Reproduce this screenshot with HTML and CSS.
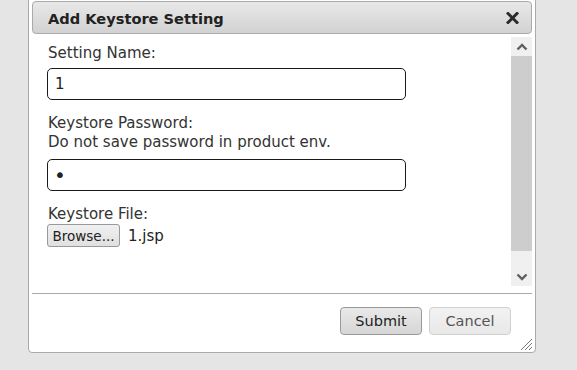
FILE: index.html
```html
<!DOCTYPE html>
<html lang="en">
<head>
    <meta charset="UTF-8">
    <title>Add Keystore Setting</title>
    <link rel="stylesheet" href="styles.css">
</head>
<body>

    <!-- Dialog -->
    <div class="dialog">
        <div class="dialog-title">
            <span class="title-text">Add Keystore Setting</span>
            <button class="close-btn" title="Close">
                <svg width="13" height="12" viewBox="0 0 13 12">
                    <path d="M2 1.5 L11 10.5 M11 1.5 L2 10.5" stroke="#2b2b2b" stroke-width="3" stroke-linecap="square"/>
                </svg>
            </button>
        </div>

        <!-- Scrollable body -->
        <div class="dialog-body">
            <form class="form-area">
                <div class="field">
                    <div class="field-label">Setting Name:</div>
                    <input class="text-input" type="text" value="1">
                </div>
                <div class="field">
                    <div class="field-label">Keystore Password:<br>Do not save password in product env.</div>
                    <input class="text-input pass" type="password" value="x">
                </div>
                <div class="field">
                    <div class="field-label">Keystore File:</div>
                    <div class="file-row">
                        <button type="button" class="browse-btn">Browse...</button>
                        <span class="file-name">1.jsp</span>
                    </div>
                </div>
            </form>

            <div class="scrollbar">
                <div class="scroll-arrow">
                    <svg width="12" height="8" viewBox="0 0 12 8"><path d="M1.5 6.5 L6 2 L10.5 6.5" fill="none" stroke="#606060" stroke-width="2.4"/></svg>
                </div>
                <div class="scroll-thumb"></div>
                <div class="scroll-track"></div>
                <div class="scroll-arrow">
                    <svg width="12" height="8" viewBox="0 0 12 8"><path d="M1.5 1.5 L6 6 L10.5 1.5" fill="none" stroke="#606060" stroke-width="2.4"/></svg>
                </div>
            </div>
        </div>

        <div class="dialog-footer">
            <button class="btn">Submit</button>
            <button class="btn btn-cancel">Cancel</button>
        </div>

        <!-- Resize grip -->
        <span class="resize-grip">
            <svg width="14" height="14" viewBox="0 0 14 14">
                <path d="M13 2 L2 13 M13 6 L6 13 M13 10 L10 13" stroke="#777" stroke-width="1"/>
            </svg>
        </span>
    </div>

</body>
</html>
```

FILE: styles.css
```css
/* General Styling */
body {
    font-family: "DejaVu Sans", Verdana, sans-serif;
    font-size: 15px;
    color: #333;
    background-color: #e5e5e5;
    margin: 0;
    padding: 0;
}

/* Dialog Styling */
.dialog {
    position: relative;
    box-sizing: border-box;
    width: 508px;
    height: 356px;
    margin: -3px 0 0 28px;
    padding: 3px;
    background-color: #fff;
    border: 1px solid #aaa;
    border-radius: 4px;
    display: flex;
    flex-direction: column;
}

.dialog-title {
    box-sizing: border-box;
    height: 33px;
    display: flex;
    align-items: center;
    justify-content: space-between;
    padding: 0 12px 0 15px;
    border: 1px solid #aaa;
    border-radius: 4px;
    background: linear-gradient(#e8e8e8, #d2d2d2);
}

.title-text {
    font-weight: bold;
    font-size: 14.6px;
    color: #222;
    padding-top: 1px;
}

.close-btn {
    border: none;
    background: none;
    padding: 0;
    display: flex;
    cursor: pointer;
}

/* Body Styling */
.dialog-body {
    margin-top: 3px;
    height: 249px;
    display: flex;
}

.form-area {
    flex: 1;
    margin: 0;
    padding: 7px 0 0 15px;
}

.field {
    margin-bottom: 14px;
}

.field-label {
    line-height: 19px;
    padding-left: 1px;
}

.text-input {
    display: block;
    box-sizing: border-box;
    width: 359px;
    height: 32px;
    margin-top: 5px;
    padding: 0 7px;
    border: 1.5px solid #1a1a1a;
    border-radius: 5px;
    font-family: "DejaVu Sans", Verdana, sans-serif;
    font-size: 15px;
    color: #222;
    outline: none;
}

.text-input.pass {
    margin-top: 7px;
    font-size: 20px;
    padding-left: 6px;
}

.file-row {
    display: flex;
    align-items: center;
    gap: 8px;
}

.browse-btn {
    box-sizing: border-box;
    height: 23px;
    width: 73px;
    padding: 0;
    font-family: "DejaVu Sans", Verdana, sans-serif;
    font-size: 13.5px;
    color: #222;
    background: linear-gradient(#f0f0f0, #e0e0e0);
    border: 1px solid #999;
    border-radius: 3px;
}

.file-name {
    color: #222;
}

/* Scrollbar */
.scrollbar {
    width: 21px;
    display: flex;
    flex-direction: column;
    background-color: #f0f0f0;
}

.scroll-arrow {
    height: 19px;
    display: flex;
    align-items: center;
    justify-content: center;
}

.scroll-thumb {
    height: 195px;
    background-color: #cdcdcd;
}

.scroll-track {
    height: 16px;
}

/* Footer */
.dialog-footer {
    margin-top: 7px;
    border-top: 1px solid #aaa;
    padding: 13px 21px 0 0;
    display: flex;
    justify-content: flex-end;
    gap: 7px;
}

.btn {
    box-sizing: border-box;
    width: 82px;
    height: 28px;
    font-family: "DejaVu Sans", Verdana, sans-serif;
    font-size: 14.5px;
    color: #222;
    background: linear-gradient(#e9e9e9, #d6d6d6);
    border: 1px solid #999;
    border-radius: 4px;
    cursor: pointer;
}

.btn-cancel {
    color: #555;
    background: linear-gradient(#f2f2f2, #e8e8e8);
    border-color: #d0d0d0;
}

.resize-grip {
    position: absolute;
    right: 2px;
    bottom: 1px;
    display: flex;
}
```
